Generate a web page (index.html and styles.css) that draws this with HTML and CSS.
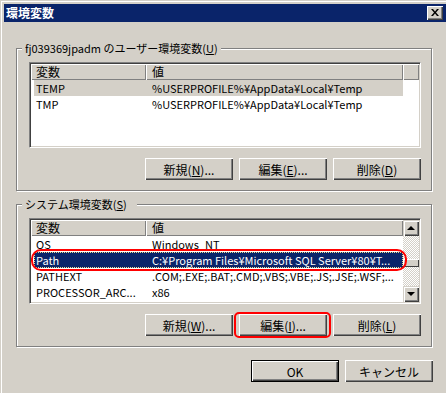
FILE: index.html
```html
<!DOCTYPE html>
<html lang="ja">
<head>
  <meta charset="UTF-8">
  <title>環境変数</title>
  <link rel="stylesheet" href="styles.css">
</head>
<body>

<div class="window">
  <div class="titlebar">
    <span class="title">環境変数</span>
    <span class="close-btn">
      <svg width="10" height="9" viewBox="0 0 10 9"><path d="M1 1h2l2 2.5 2-2.5h2l-3 3.5 3 3.5h-2l-2-2.5-2 2.5h-2l3-3.5z" fill="#000"/></svg>
    </span>
  </div>

  <div class="content">
    <!-- ユーザー環境変数 -->
    <div class="group">
      <span class="legend">fj039369jpadm のユーザー環境変数(<u>U</u>)</span>
      <div class="listview">
        <div class="lv-main wide">
          <div class="lv-header">
            <div class="hcell col1">変数</div>
            <div class="hcell col2">値</div>
            <div class="hcell hfill"></div>
          </div>
          <div class="row inactive">
            <div class="cell col1">TEMP</div>
            <div class="cell col2">%USERPROFILE%¥AppData¥Local¥Temp</div>
          </div>
          <div class="row">
            <div class="cell col1">TMP</div>
            <div class="cell col2">%USERPROFILE%¥AppData¥Local¥Temp</div>
          </div>
        </div>
      </div>
      <div class="btn-row">
        <button class="btn">新規(<u>N</u>)...</button>
        <button class="btn">編集(<u>E</u>)...</button>
        <button class="btn">削除(<u>D</u>)</button>
      </div>
    </div>

    <!-- システム環境変数 -->
    <div class="group second">
      <span class="legend">システム環境変数(<u>S</u>)</span>
      <div class="listview">
        <div class="lv-main">
          <div class="lv-header">
            <div class="hcell col1">変数</div>
            <div class="hcell col2">値</div>
          </div>
          <div class="row">
            <div class="cell col1">OS</div>
            <div class="cell col2">Windows_NT</div>
          </div>
          <div class="row selected">
            <div class="cell col1">Path</div>
            <div class="cell col2">C:¥Program Files¥Microsoft SQL Server¥80¥T...</div>
            <span class="mark mark-row"></span>
          </div>
          <div class="row">
            <div class="cell col1">PATHEXT</div>
            <div class="cell col2">.COM;.EXE;.BAT;.CMD;.VBS;.VBE;.JS;.JSE;.WSF;...</div>
          </div>
          <div class="row">
            <div class="cell col1">PROCESSOR_ARC...</div>
            <div class="cell col2">x86</div>
          </div>
        </div>
        <div class="scrollbar">
          <div class="sb-btn"><span class="arrow up"></span></div>
          <div class="sb-track"><div class="sb-thumb"></div></div>
          <div class="sb-btn"><span class="arrow down"></span></div>
        </div>
      </div>
      <div class="btn-row">
        <button class="btn">新規(<u>W</u>)...</button>
        <button class="btn marked">編集(<u>I</u>)...<span class="mark mark-btn"></span></button>
        <button class="btn">削除(<u>L</u>)</button>
      </div>
    </div>

    <div class="btn-row dialog-btns">
      <button class="btn default">OK</button>
      <button class="btn">キャンセル</button>
    </div>
  </div>
</div>

</body>
</html>
```

FILE: styles.css
```css
:root {
  --face: #d4d0c8;
  --shadow: #808080;
  --dark: #404040;
  --navy: #0a246a;
}

* {
  margin: 0;
  padding: 0;
  box-sizing: border-box;
}

body {
  background: var(--face);
  overflow: hidden;
  font-family: "Noto Sans CJK JP", "Liberation Sans", sans-serif;
  font-size: 11px;
  color: #000;
}

u {
  text-decoration: underline;
  text-underline-offset: 1px;
}

.window {
  width: 450px;
  height: 393px;
  border-top: 1px solid var(--face);
  border-left: 1px solid var(--face);
  box-shadow: inset 1px 1px #fff;
  padding: 3px 0 0 3px;
}

.titlebar {
  height: 18px;
  background: var(--navy);
  display: flex;
  align-items: center;
  justify-content: space-between;
  padding: 0 7px 0 2px;
}

.title {
  color: #fff;
  font-size: 12px;
  font-weight: bold;
  line-height: 18px;
}

.close-btn {
  width: 16px;
  height: 14px;
  background: var(--face);
  box-shadow: inset 1px 1px #fff, inset -1px -1px var(--dark), inset -2px -2px var(--shadow);
  display: flex;
  align-items: center;
  justify-content: center;
  padding: 0 1px 1px 0;
}

.content {
  padding: 26px 0 0 12px;
}

/* group box */
.group {
  position: relative;
  width: 416px;
  height: 143px;
  border: 1px solid var(--shadow);
  box-shadow: inset 1px 1px #fff, 1px 1px #fff;
  padding: 13px 0 0 12px;
}

.group.second {
  margin-top: 13px;
}

.legend {
  position: absolute;
  top: -8px;
  left: 5px;
  padding: 0 3px;
  background: var(--face);
  line-height: 14px;
  white-space: nowrap;
}

.group.second .legend {
  padding-right: 10px;
}

/* list view */
.listview {
  width: 392px;
  height: 86px;
  background: #fff;
  border: 1px solid;
  border-color: var(--shadow) #fff #fff var(--shadow);
  box-shadow: inset 1px 1px var(--dark), inset -1px -1px var(--face);
  padding: 1px;
  display: flex;
}

.lv-main {
  width: 372px;
}

.lv-main.wide {
  width: 388px;
}

.lv-header {
  display: flex;
  height: 16px;
}

.hcell {
  background: var(--face);
  box-shadow: inset 1px 1px #fff, inset -1px -1px var(--shadow);
  font-size: 12px;
  line-height: 15px;
  padding-left: 5px;
}

.hcell.col1 {
  width: 115px;
}

.hcell.col2 {
  width: 257px;
  padding-left: 6px;
}

.hcell.hfill {
  flex: 1;
}

.row {
  position: relative;
  display: flex;
  width: 369px;
  height: 16px;
  margin-left: 3px;
  line-height: 16px;
  white-space: nowrap;
}

.cell {
  overflow: hidden;
}

.cell.col1 {
  width: 112px;
  padding-left: 2px;
}

.cell.col2 {
  flex: 1;
  padding-left: 6px;
}

.row.inactive {
  background: var(--face);
}

.row.selected {
  background: var(--navy);
  color: #fff;
  outline: 1px dotted #e8d890;
  outline-offset: -1px;
}

/* scrollbar */
.scrollbar {
  width: 16px;
  display: flex;
  flex-direction: column;
}

.sb-btn {
  height: 16px;
  background: var(--face);
  box-shadow: inset 1px 1px var(--face), inset 2px 2px #fff, inset -1px -1px var(--dark), inset -2px -2px var(--shadow);
  display: flex;
  align-items: center;
  justify-content: center;
}

.arrow {
  width: 0;
  height: 0;
  border-left: 4px solid transparent;
  border-right: 4px solid transparent;
}

.arrow.up {
  border-bottom: 4px solid #000;
  margin-top: -1px;
}

.arrow.down {
  border-top: 4px solid #000;
}

.sb-track {
  flex: 1;
  background: repeating-conic-gradient(#fff 0 25%, var(--face) 0 50%) 0 0 / 2px 2px;
}

.sb-thumb {
  height: 8px;
  margin-top: 23px;
  background: var(--face);
  box-shadow: inset 1px 1px #fff, inset -1px -1px var(--dark);
}

/* buttons */
.btn-row {
  display: flex;
  justify-content: flex-end;
  gap: 6px;
  width: 392px;
  margin-top: 10px;
}

.btn {
  position: relative;
  width: 88px;
  height: 22px;
  border: none;
  background: var(--face);
  font-family: inherit;
  font-size: 12px;
  color: #000;
  box-shadow: inset 1px 1px #fff, inset -1px -1px var(--dark), inset -2px -2px var(--shadow);
}

.btn.default {
  border: 1px solid #000;
}

.dialog-btns {
  width: 417px;
  margin-top: 13px;
}

/* red annotation marks */
.mark {
  position: absolute;
  border: 2px solid #ff0000;
  pointer-events: none;
}

.mark-row {
  left: -3px;
  right: -4px;
  top: -3px;
  bottom: -3px;
  border-radius: 10px;
}

.mark-btn {
  left: -5px;
  right: -4px;
  top: -2px;
  bottom: -2px;
  border-radius: 5px;
}
```
